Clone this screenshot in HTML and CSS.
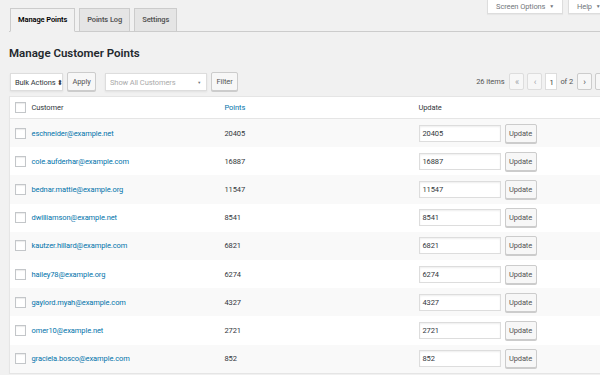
FILE: index.html
```html
<!DOCTYPE html>
<html>
<head>
  <meta charset="UTF-8">
  <title>Manage Points</title>
  <link rel="stylesheet" href="styles.css">
</head>
<body>
  <div class="wrap">
    <div class="screen-meta">
      <button class="meta-button">Screen Options <span class="caret">▼</span></button>
      <button class="meta-button">Help <span class="caret">▼</span></button>
    </div>

    <div class="tabs">
      <a class="tab active">Manage Points</a>
      <a class="tab">Points Log</a>
      <a class="tab">Settings</a>
    </div>

    <h2 class="page-title">Manage Customer Points</h2>

    <div class="toolbar">
      <div class="actions">
        <div class="select bulk">Bulk Actions <span class="updown">⬍</span></div>
        <button class="button">Apply</button>
        <div class="select customers">Show All Customers <span class="caret small">▼</span></div>
        <button class="button">Filter</button>
      </div>
      <div class="pagination">
        <span class="count">26 items</span>
        <span class="page-btn disabled">«</span>
        <span class="page-btn disabled">‹</span>
        <span class="page-input">1</span>
        <span class="of">of 2</span>
        <span class="page-btn">›</span>
        <span class="page-btn">»</span>
      </div>
    </div>

    <table class="points-table">
      <colgroup>
        <col class="col-cb">
        <col class="col-customer">
        <col class="col-points">
        <col>
      </colgroup>
      <thead>
        <tr>
          <th><span class="checkbox"></span></th>
          <th>Customer</th>
          <th><a class="sort-link">Points</a></th>
          <th>Update</th>
        </tr>
      </thead>
      <tbody>
        <tr>
          <td><span class="checkbox"></span></td>
          <td><a class="email">eschneider@example.net</a></td>
          <td>20405</td>
          <td><span class="points-input">20405</span><button class="button">Update</button></td>
        </tr>
        <tr>
          <td><span class="checkbox"></span></td>
          <td><a class="email">cole.aufderhar@example.com</a></td>
          <td>16887</td>
          <td><span class="points-input">16887</span><button class="button">Update</button></td>
        </tr>
        <tr>
          <td><span class="checkbox"></span></td>
          <td><a class="email">bednar.mattie@example.org</a></td>
          <td>11547</td>
          <td><span class="points-input">11547</span><button class="button">Update</button></td>
        </tr>
        <tr>
          <td><span class="checkbox"></span></td>
          <td><a class="email">dwilliamson@example.net</a></td>
          <td>8541</td>
          <td><span class="points-input">8541</span><button class="button">Update</button></td>
        </tr>
        <tr>
          <td><span class="checkbox"></span></td>
          <td><a class="email">kautzer.hillard@example.com</a></td>
          <td>6821</td>
          <td><span class="points-input">6821</span><button class="button">Update</button></td>
        </tr>
        <tr>
          <td><span class="checkbox"></span></td>
          <td><a class="email">hailey78@example.org</a></td>
          <td>6274</td>
          <td><span class="points-input">6274</span><button class="button">Update</button></td>
        </tr>
        <tr>
          <td><span class="checkbox"></span></td>
          <td><a class="email">gaylord.myah@example.com</a></td>
          <td>4327</td>
          <td><span class="points-input">4327</span><button class="button">Update</button></td>
        </tr>
        <tr>
          <td><span class="checkbox"></span></td>
          <td><a class="email">omer10@example.net</a></td>
          <td>2721</td>
          <td><span class="points-input">2721</span><button class="button">Update</button></td>
        </tr>
        <tr>
          <td><span class="checkbox"></span></td>
          <td><a class="email">graciela.bosco@example.com</a></td>
          <td>852</td>
          <td><span class="points-input">852</span><button class="button">Update</button></td>
        </tr>
      </tbody>
    </table>
  </div>
</body>
</html>
```

FILE: styles.css
```css
:root {
  --bg: #f1f1f1;
  --text: #32373c;
  --muted: #72777c;
  --link: #0073aa;
  --border: #ccc;
  --row-border: #e5e5e5;
  --stripe: #f9f9f9;
}

html, body {
  overflow: hidden;
}

body {
  margin: 0;
  padding: 0;
  background-color: var(--bg);
  color: var(--text);
  font-family: Roboto, "Liberation Sans", sans-serif;
  font-size: 7.5px;
  letter-spacing: -0.1px;
}

.wrap {
  width: 601px;
  margin-left: 9px;
  position: relative;
}

.screen-meta {
  position: absolute;
  top: 0;
  right: 4px;
  display: flex;
  gap: 5px;
}

.meta-button {
  height: 14px;
  padding: 0 8px;
  border: 1px solid #ddd;
  border-top: none;
  background-color: #fff;
  color: var(--muted);
  font-family: inherit;
  font-size: 7.5px;
  letter-spacing: -0.1px;
  white-space: nowrap;
  box-shadow: 0 1px 1px rgba(0, 0, 0, 0.04);
}

.meta-button:first-child {
  margin-right: 0;
}

.meta-button:last-child {
  width: 38px;
  text-align: left;
}

.caret {
  font-size: 5px;
  margin-left: 2px;
  vertical-align: 1px;
}

.tabs {
  display: flex;
  gap: 4px;
  padding-top: 8px;
  padding-left: 1px;
  border-bottom: 1px solid var(--border);
}

.tab {
  display: block;
  height: 22px;
  line-height: 22px;
  padding: 0 7px;
  margin-bottom: -1px;
  border: 1px solid var(--border);
  border-bottom: none;
  background-color: #e5e5e5;
  color: #555;
  font-weight: 600;
  font-size: 7.5px;
  white-space: nowrap;
}

.tab.active {
  background-color: var(--bg);
  color: #000;
  border-bottom: 1px solid var(--bg);
}

.page-title {
  margin: 13px 0 0 0;
  font-size: 11.5px;
  font-weight: 600;
  letter-spacing: 0;
  color: #23282d;
  line-height: 16px;
}

.toolbar {
  display: flex;
  justify-content: space-between;
  align-items: center;
  margin-top: 11px;
  height: 19px;
}

.actions {
  display: flex;
  align-items: center;
  gap: 4px;
  padding-left: 1px;
}

.select {
  height: 18px;
  line-height: 18px;
  box-sizing: border-box;
  background-color: #fff;
  border: 1px solid #ddd;
  box-shadow: 0 1px 2px rgba(0, 0, 0, 0.07);
  padding: 0 4px;
  white-space: nowrap;
}

.select.bulk {
  width: 53px;
  color: var(--text);
}

.updown {
  font-size: 7px;
}

.select.customers {
  width: 102px;
  margin-left: 5px;
  color: #aaa;
  display: flex;
  justify-content: space-between;
}

.caret.small {
  color: var(--muted);
  font-size: 4px;
  margin-right: 1px;
}

.button {
  height: 19px;
  box-sizing: border-box;
  padding: 0 5px;
  background-color: #f7f7f7;
  border: 1px solid var(--border);
  border-radius: 2px;
  box-shadow: 0 1px 0 #ccc;
  color: #555;
  font-family: inherit;
  font-size: 7.5px;
  letter-spacing: -0.1px;
}

.actions .button {
  width: 29px;
  padding: 0;
}

.actions .button:last-child {
  width: 27px;
}

.pagination {
  display: flex;
  align-items: center;
  gap: 3px;
  color: #555;
}

.count {
  margin-right: 2px;
}

.page-btn {
  width: 15px;
  height: 17px;
  line-height: 16px;
  box-sizing: border-box;
  text-align: center;
  border: 1px solid var(--border);
  background-color: #f7f7f7;
  border-radius: 2px;
  font-size: 9px;
  color: #555;
}

.page-btn.disabled {
  color: #a0a5aa;
  border-color: #ddd;
  background-color: #f7f7f7;
}

.page-input {
  width: 12px;
  height: 17px;
  line-height: 17px;
  box-sizing: border-box;
  text-align: center;
  background-color: #fff;
  border: 1px solid #ddd;
  color: var(--text);
}

.of {
  margin-right: 1px;
}

.points-table {
  margin-top: 5px;
  width: 100%;
  table-layout: fixed;
  border-collapse: collapse;
  border: 1px solid var(--row-border);
  background-color: #fff;
  box-shadow: 0 1px 1px rgba(0, 0, 0, 0.04);
}

.col-cb {
  width: 20px;
}

.col-customer {
  width: 193px;
}

.col-points {
  width: 194px;
}

.points-table th,
.points-table td {
  padding: 0 0 0 2px;
  text-align: left;
  font-weight: 400;
  vertical-align: middle;
  white-space: nowrap;
}

.points-table th {
  height: 21px;
  border-bottom: 1px solid var(--row-border);
  color: var(--text);
}

.points-table td {
  height: 28.2px;
}

.points-table th:first-child,
.points-table td:first-child {
  padding: 0 0 0 5px;
}

.points-table tbody tr:nth-child(odd) {
  background-color: var(--stripe);
}

.checkbox {
  display: block;
  width: 9px;
  height: 9px;
  background-color: #fff;
  border: 1px solid #c3c6c9;
  box-shadow: inset 0 1px 1px rgba(0, 0, 0, 0.08);
}

.sort-link,
.email {
  color: var(--link);
}

.points-input {
  display: inline-block;
  vertical-align: middle;
  width: 82px;
  height: 17px;
  line-height: 16px;
  box-sizing: border-box;
  padding-left: 3px;
  margin-right: 4px;
  background-color: #fff;
  border: 1px solid #ddd;
  box-shadow: inset 0 1px 2px rgba(0, 0, 0, 0.07);
}

.points-table .button {
  vertical-align: middle;
  width: 32px;
  padding: 0;
}
```
